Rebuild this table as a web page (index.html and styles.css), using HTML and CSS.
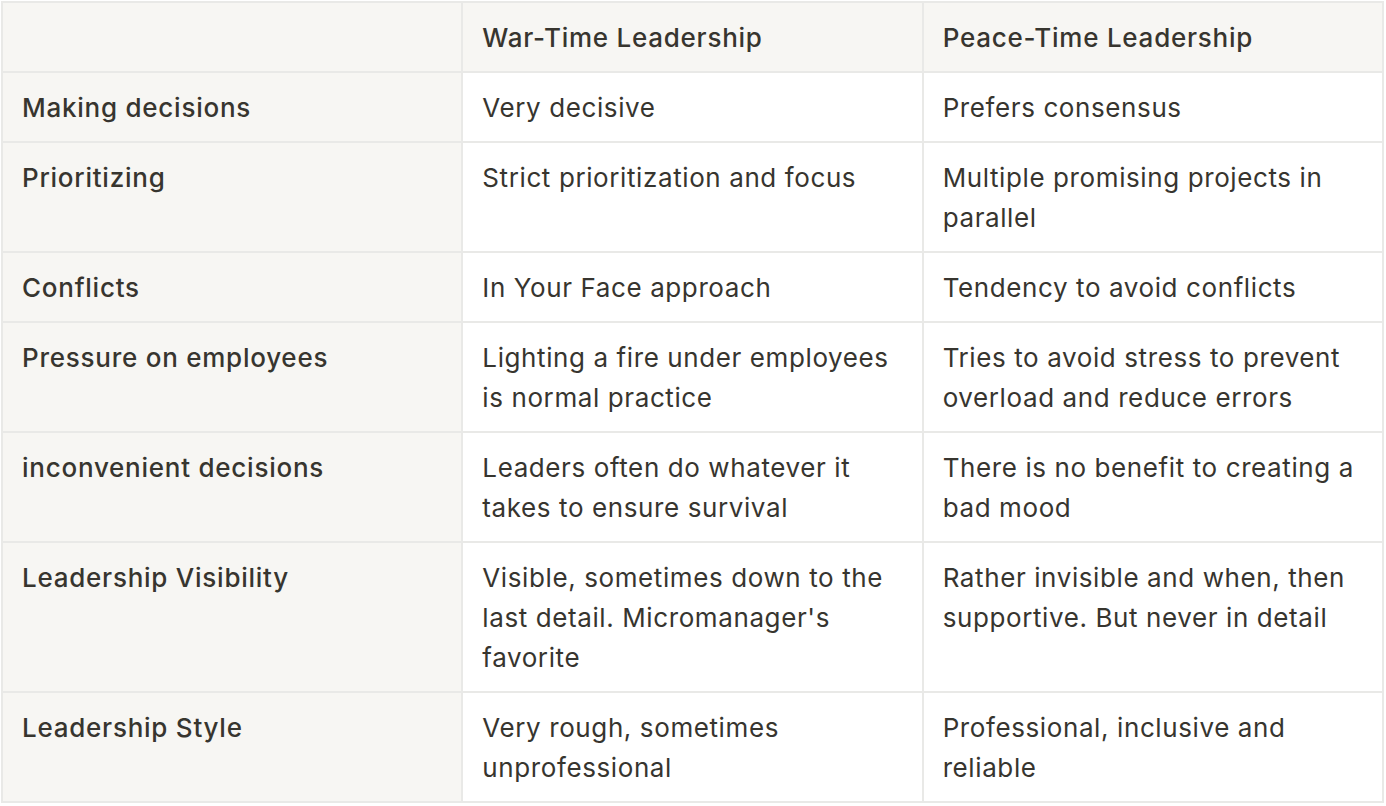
FILE: index.html
```html
<!DOCTYPE html>
<html lang="en">
<head>
<meta charset="utf-8">
<title>War-Time vs Peace-Time Leadership</title>
<link rel="stylesheet" href="styles.css">
</head>
<body>
<table class="grid">
  <colgroup><col class="c1"><col class="c2"><col class="c3"></colgroup>
  <thead>
    <tr>
      <th class="head"></th>
      <th class="head">War-Time Leadership</th>
      <th class="head">Peace-Time Leadership</th>
    </tr>
  </thead>
  <tbody>
    <tr><th class="head">Making decisions</th><td>Very decisive</td><td>Prefers consensus</td></tr>
    <tr><th class="head">Prioritizing</th><td>Strict prioritization and focus</td><td>Multiple promising projects in parallel</td></tr>
    <tr><th class="head">Conflicts</th><td>In Your Face approach</td><td>Tendency to avoid conflicts</td></tr>
    <tr><th class="head">Pressure on employees</th><td>Lighting a fire under employees is normal practice</td><td>Tries to avoid stress to prevent overload and reduce errors</td></tr>
    <tr><th class="head">inconvenient decisions</th><td>Leaders often do whatever it takes to ensure survival</td><td>There is no benefit to creating a bad mood</td></tr>
    <tr><th class="head">Leadership Visibility</th><td>Visible, sometimes down to the last detail. Micromanager's favorite</td><td>Rather invisible and when, then supportive. But never in detail</td></tr>
    <tr><th class="head">Leadership Style</th><td>Very rough, sometimes unprofessional</td><td>Professional, inclusive and reliable</td></tr>
  </tbody>
</table>
</body>
</html>
```
FILE: styles.css
```css
html, body {
  margin: 0;
  padding: 0;
  background: #ffffff;
}
body {
  padding: 1px 0 0 1px;
  font-family: Inter, "Noto Sans", "Liberation Sans", sans-serif;
  color: #37352f;
}
.grid {
  width: 1383px;
  table-layout: fixed;
  border-collapse: separate;
  border-spacing: 0;
  border-top: 2px solid #e9e9e7;
  border-left: 2px solid #e9e9e7;
}
.grid th,
.grid td {
  border-right: 2px solid #e9e9e7;
  border-bottom: 2px solid #e9e9e7;
  padding: 15px 18px 13px 19px;
  font-size: 26px;
  line-height: 40px;
  letter-spacing: 0.6px;
  text-align: left;
  vertical-align: top;
  font-weight: 400;
}
.grid .head {
  background: #f7f6f3;
  font-weight: 500;
  letter-spacing: 0.75px;
}
```
